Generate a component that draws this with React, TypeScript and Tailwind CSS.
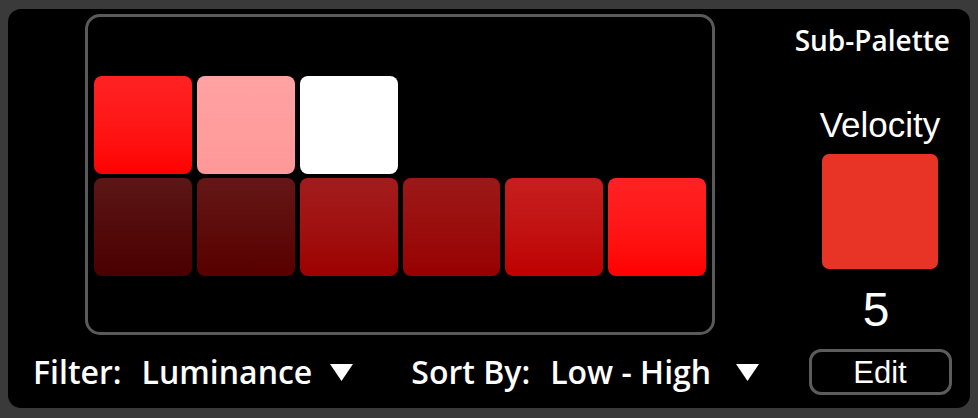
const swatchRows = [
  [
    "from-[#ff2222] to-[#ff0000]",
    "from-[#ffa2a2] to-[#ff9898]",
    "from-[#ffffff] to-[#ffffff]",
  ],
  [
    "from-[#5c1616] to-[#4a0000]",
    "from-[#641616] to-[#580000]",
    "from-[#a21c1c] to-[#9e0000]",
    "from-[#9c1818] to-[#980000]",
    "from-[#c61e1e] to-[#be0000]",
    "from-[#ff2222] to-[#ff0000]",
  ],
];

function Caret() {
  return (
    <svg width="23" height="17" viewBox="0 0 23 17" className="shrink-0">
      <polygon points="0,0 23,0 11.5,17" fill="white" />
    </svg>
  );
}

export default function App() {
  return (
    <div className="w-[978px] h-[418px] bg-[#3a3a3a] pt-[9px] pb-[10px] px-[8px]">
      <div className="h-full w-full bg-black rounded-[13px] flex text-white">
        {/* left: palette grid + controls */}
        <div className="w-[782px] flex flex-col">
          <div className="ml-[77px] mt-[5px] w-[630px] h-[321px] border-[3px] border-[#5a5a5a] rounded-[15px] px-[6px] pt-[59px]">
            <div className="grid grid-cols-6 gap-x-[5px] gap-y-[4px]">
              {swatchRows[0].map((c, i) => (
                <div key={"a" + i} className={`h-[98px] rounded-lg bg-gradient-to-b ${c}`} />
              ))}
              <div className="col-span-3" />
              {swatchRows[1].map((c, i) => (
                <div key={"b" + i} className={`h-[98px] rounded-lg bg-gradient-to-b ${c}`} />
              ))}
            </div>
          </div>

          <div
            className="mt-[21px] flex items-center text-[32px] leading-none font-semibold"
            style={{ fontFamily: '"Open Sans", sans-serif' }}
          >
            <span className="ml-[25px]">Filter:</span>
            <span className="ml-[20px]">Luminance</span>
            <span className="ml-[18px]">
              <Caret />
            </span>
            <span className="ml-[58px]">Sort By:</span>
            <span className="ml-[20px]">Low - High</span>
            <span className="ml-[25px]">
              <Caret />
            </span>
          </div>
        </div>

        {/* right: sub-palette */}
        <div className="flex-1 flex flex-col items-center">
          <div
            className="self-end mr-[20px] mt-[17px] text-[28px] leading-none font-semibold"
            style={{ fontFamily: '"Open Sans", sans-serif' }}
          >
            Sub-Palette
          </div>
          <div
            className="mt-[53px] text-[35px] leading-none"
            style={{ fontFamily: '"Liberation Sans", Arial, sans-serif' }}
          >
            Velocity
          </div>
          <div className="mt-[12px] w-[116px] h-[115px] rounded-[7px] bg-[#e83426]" />
          <div
            className="mt-[17px] mr-[8px] text-[48px] leading-none"
            style={{ fontFamily: '"Liberation Sans", Arial, sans-serif' }}
          >
            5
          </div>
          <button
            className="mt-[15px] w-[143px] h-[46px] border-[3px] border-[#5c5c5c] rounded-[12px] flex items-center justify-center text-[31px] leading-none text-white"
            style={{ fontFamily: '"Liberation Sans", Arial, sans-serif' }}
          >
            Edit
          </button>
        </div>
      </div>
    </div>
  );
}
